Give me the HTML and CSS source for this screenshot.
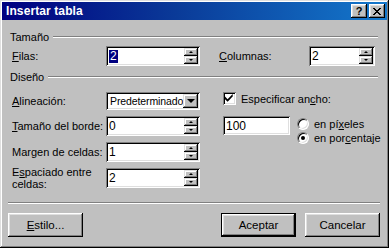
FILE: index.html
```html
<!DOCTYPE html>
<html lang="es">
<head>
<meta charset="utf-8">
<title>Insertar tabla</title>
<link rel="stylesheet" href="styles.css">
</head>
<body>
<div class="window">
  <div class="titlebar">
    <span class="title">Insertar tabla</span>
    <div class="tb-btns">
      <span class="tb-btn help">?</span>
      <span class="tb-btn close"><svg width="8" height="7" viewBox="0 0 8 7"><path d="M0 0h2v1h1v1h2v-1h1v-1h2v1h-1v1h-1v1h-1v1h1v1h1v1h1v1h-2v-1h-1v-1h-2v1h-1v1h-2v-1h1v-1h1v-1h1v-1h-1v-1h-1v-1h-1z" fill="#000"/></svg></span>
    </div>
  </div>
  <div class="content">
    <div class="group-head"><span>Tamaño</span><i class="rule"></i></div>
    <div class="size-row">
      <span class="lbl lbl-main"><u>F</u>ilas:</span>
      <div class="field spin-field w94">
        <span class="val"><span class="hl">2</span></span>
        <span class="spin"><b class="sb"><i class="up"></i></b><b class="sb"><i class="down"></i></b></span>
      </div>
      <span class="lbl lbl-col"><u>C</u>olumnas:</span>
      <div class="field spin-field w66">
        <span class="val">2</span>
        <span class="spin"><b class="sb"><i class="up"></i></b><b class="sb"><i class="down"></i></b></span>
      </div>
    </div>

    <div class="group-head diseno"><span>Diseño</span><i class="rule"></i></div>
    <div class="design">
      <div class="design-left">
        <div class="drow drow-select">
          <span class="lbl lbl-main"><u>A</u>lineación:</span>
          <div class="field select w94">
            <span class="val">Predeterminado</span>
            <span class="drop"><i class="down big"></i></span>
          </div>
        </div>
        <div class="drow">
          <span class="lbl lbl-main"><u>T</u>amaño del borde:</span>
          <div class="field spin-field w94">
            <span class="val">0</span>
            <span class="spin"><b class="sb"><i class="up"></i></b><b class="sb"><i class="down"></i></b></span>
          </div>
        </div>
        <div class="drow">
          <span class="lbl lbl-main">Margen de celdas:</span>
          <div class="field spin-field w94">
            <span class="val">1</span>
            <span class="spin"><b class="sb"><i class="up"></i></b><b class="sb"><i class="down"></i></b></span>
          </div>
        </div>
        <div class="drow">
          <span class="lbl lbl-main lbl-two">E<u>s</u>paciado entre<br>celdas:</span>
          <div class="field spin-field w94">
            <span class="val">2</span>
            <span class="spin"><b class="sb"><i class="up"></i></b><b class="sb"><i class="down"></i></b></span>
          </div>
        </div>
      </div>
      <div class="design-right">
        <div class="check-row">
          <span class="checkbox"><svg width="9" height="9" viewBox="0 0 7 7"><path d="M6 0v2l-1 1v0l-2 2l-1 1h0l-2-2v-2l2 2l4-4z" fill="#000"/></svg></span>
          <span class="lbl">Especificar an<u>c</u>ho:</span>
        </div>
        <div class="width-row">
          <div class="field w67 plain"><span class="val">100</span></div>
          <div class="radios">
            <div class="radio-row"><span class="radio"></span><span class="lbl">en pí<u>x</u>eles</span></div>
            <div class="radio-row"><span class="radio on"></span><span class="lbl">en por<u>c</u>entaje</span></div>
          </div>
        </div>
      </div>
    </div>

    <div class="sep"></div>
    <div class="buttons">
      <span class="btn"><span><u>E</u>stilo...</span></span>
      <span class="spacer"></span>
      <span class="btn default"><span>Aceptar</span></span>
      <span class="btn"><span>Cancelar</span></span>
    </div>
  </div>
</div>
</body>
</html>
```

FILE: styles.css
```css
* { box-sizing: border-box; }
html, body { margin: 0; padding: 0; background: #c0c0c0; }
body {
  font-family: "Liberation Sans", Arial, sans-serif;
  font-size: 11px;
  color: #000;
}
u { text-decoration: underline; text-underline-offset: 1px; }

.window {
  width: 389px;
  height: 248px;
  background: #c0c0c0;
  padding: 2px;
  box-shadow: inset -1px -1px #000, inset 1px 1px #dfdfdf, inset -2px -2px #808080, inset 2px 2px #fff;
  display: flex;
  flex-direction: column;
}

.titlebar {
  height: 18px;
  background: linear-gradient(to right, #000080 0%, #0a3a98 45%, #1478cc 100%);
  color: #fff;
  display: flex;
  align-items: center;
  padding: 0 2px 0 4px;
}
.title { font-weight: bold; font-size: 12px; flex: 1; letter-spacing: 0.1px; }
.tb-btns { display: flex; gap: 2px; }
.tb-btn {
  width: 16px;
  height: 14px;
  background: #c0c0c0;
  color: #000;
  display: flex;
  align-items: center;
  justify-content: center;
  box-shadow: inset -1px -1px #000, inset 1px 1px #fff, inset -2px -2px #808080, inset 2px 2px #dfdfdf;
  font-weight: bold;
  font-size: 11px;
  line-height: 1;
}
.tb-btn.help { padding-top: 1px; }

.content {
  flex: 1;
  padding: 10px 7px 0 6px;
  display: flex;
  flex-direction: column;
}

.group-head {
  height: 14px;
  display: flex;
  align-items: center;
  padding: 0 2px;
}
.group-head .rule {
  flex: 1;
  height: 2px;
  margin-left: 4px;
  border-top: 1px solid #808080;
  border-bottom: 1px solid #fff;
}
.group-head.diseno { margin-top: 4px; }

.lbl { white-space: nowrap; }
.lbl-main { width: 94px; flex: none; }
.lbl-two { line-height: 12px; white-space: normal; padding-top: 0; }

.size-row {
  margin-top: 2px;
  height: 20px;
  display: flex;
  align-items: center;
  padding-left: 4px;
}
.lbl-col { width: 90px; margin-left: 19px; }

.field {
  height: 20px;
  background: #fff;
  display: flex;
  align-items: stretch;
  padding: 2px;
  box-shadow: inset 1px 1px #808080, inset -1px -1px #fff, inset 2px 2px #000, inset -2px -2px #dfdfdf;
}
.w94 { width: 94px; }
.w66 { width: 66px; }
.w67 { width: 67px; height: 19px; }
.field .val {
  flex: 1;
  min-width: 0;
  display: flex;
  align-items: center;
  padding-left: 1px;
  font-size: 12px;
  white-space: nowrap;
}
.hl { background: #000080; color: #fff; padding: 0 1px; line-height: 13px; }

.spin { width: 14px; flex: none; display: flex; flex-direction: column; }
.sb {
  flex: 1;
  background: #c0c0c0;
  display: flex;
  align-items: center;
  justify-content: center;
  box-shadow: inset -1px -1px #000, inset 1px 1px #dfdfdf, inset -2px -2px #808080, inset 2px 2px #fff;
}
.up { width: 0; height: 0; border-left: 2px solid transparent; border-right: 2px solid transparent; border-bottom: 2px solid #000; }
.down { width: 0; height: 0; border-left: 2px solid transparent; border-right: 2px solid transparent; border-top: 2px solid #000; }
.down.big { border-left-width: 4px; border-right-width: 4px; border-top-width: 4px; }

.design {
  margin-top: 8px;
  display: flex;
  padding-left: 4px;
}
.design-left { display: flex; flex-direction: column; gap: 6px; }
.drow { height: 20px; display: flex; align-items: center; }
.drow-select { height: 18px; }
.select { height: 18px; }
.select .val { font-size: 10.5px; padding-left: 2px; letter-spacing: -0.1px; }
.drop {
  width: 15px;
  flex: none;
  background: #c0c0c0;
  display: flex;
  align-items: center;
  justify-content: center;
  box-shadow: inset -1px -1px #000, inset 1px 1px #dfdfdf, inset -2px -2px #808080, inset 2px 2px #fff;
}

.design-right { margin-left: 23px; display: flex; flex-direction: column; }
.check-row { height: 13px; display: flex; align-items: center; gap: 5px; }
.checkbox {
  width: 13px;
  height: 13px;
  background: #fff;
  display: flex;
  align-items: center;
  justify-content: center;
  box-shadow: inset 1px 1px #808080, inset -1px -1px #fff, inset 2px 2px #000, inset -2px -2px #dfdfdf;
}
.width-row { margin-top: 11px; display: flex; align-items: flex-start; }
.radios { margin-left: 7px; margin-top: 1px; display: flex; flex-direction: column; gap: 1px; }
.radio-row { height: 13px; display: flex; align-items: center; gap: 5px; }
.radio {
  width: 12px;
  height: 12px;
  border-radius: 50%;
  background: #fff;
  border: 1px solid;
  border-color: #808080 #fff #fff #808080;
  box-shadow: inset 1px 1px #000, inset -1px -1px #dfdfdf;
  display: flex;
  align-items: center;
  justify-content: center;
}
.radio.on::after {
  content: "";
  width: 4px;
  height: 4px;
  border-radius: 50%;
  background: #000;
}

.sep {
  margin-top: 14px;
  height: 2px;
  border-top: 1px solid #808080;
  border-bottom: 1px solid #fff;
}

.buttons {
  margin-top: 9px;
  display: flex;
  gap: 9px;
}
.spacer { flex: 1; }
.btn {
  width: 75px;
  height: 24px;
  background: #c0c0c0;
  display: flex;
  align-items: center;
  justify-content: center;
  font-size: 11.5px;
  box-shadow: inset -1px -1px #000, inset 1px 1px #fff, inset -2px -2px #808080, inset 2px 2px #dfdfdf;
}
.btn.default {
  box-shadow: inset 0 0 0 1px #000, inset -2px -2px #000, inset 2px 2px #fff, inset -3px -3px #808080, inset 3px 3px #dfdfdf;
}
```
